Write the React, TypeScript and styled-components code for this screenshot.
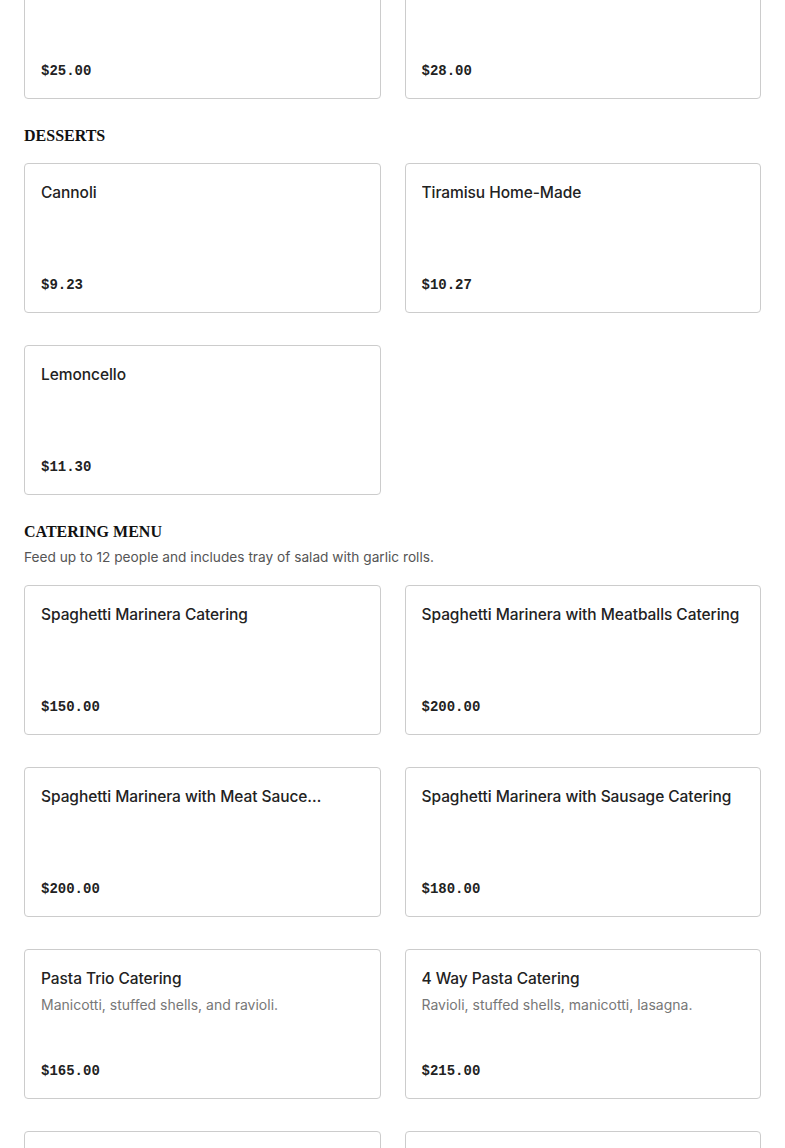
import React from "react";
import styled, { createGlobalStyle } from "styled-components";

const GlobalStyle = createGlobalStyle`
  html, body { margin: 0; padding: 0; background: #ffffff; }
  body { font-family: "Inter", "Liberation Sans", sans-serif; color: #222222; }
  * { box-sizing: border-box; }
`;

const Page = styled.div`
  padding: 0 24px 40px 24px;
  margin-top: -51px;
  display: flex;
  flex-direction: column;
  gap: 24px;
`;

const Section = styled.section`
  display: flex;
  flex-direction: column;
`;

const Heading = styled.h2`
  margin: 0;
  padding-top: 1px;
  font-family: "Liberation Serif", "Times New Roman", serif;
  font-weight: 700;
  font-size: 16px;
  line-height: 23px;
  color: #111111;
  text-transform: uppercase;
`;

const SectionDesc = styled.p`
  margin: 2px 0 0 0;
  padding-top: 1px;
  font-family: "Inter", "Liberation Sans", sans-serif;
  font-size: 13.7px;
  line-height: 23px;
  color: #555555;
`;

const Grid = styled.div<{ $offset: boolean }>`
  display: grid;
  grid-template-columns: 1fr 1fr;
  column-gap: 24px;
  row-gap: 32px;
  margin-top: ${(p) => (p.$offset ? "16px" : "0")};
`;

const Card = styled.div`
  height: 150px;
  border: 1px solid #cccccc;
  border-radius: 4px;
  padding: 17px 16px 15px 16px;
  display: flex;
  flex-direction: column;
  min-width: 0;
  background: #ffffff;
`;

const Title = styled.div`
  font-family: "Inter", "Liberation Sans", sans-serif;
  font-weight: 500;
  font-size: 15.5px;
  letter-spacing: -0.06px;
  line-height: 24px;
  color: #222222;
  display: -webkit-box;
  -webkit-line-clamp: 1;
  -webkit-box-orient: vertical;
  overflow: hidden;
`;

const Desc = styled.div`
  margin-top: 4px;
  font-family: "Inter", "Liberation Sans", sans-serif;
  font-size: 14px;
  line-height: 20px;
  color: #777777;
`;

const Price = styled.div`
  margin-top: auto;
  font-family: "Liberation Mono", "Courier New", monospace;
  font-weight: 700;
  font-size: 14px;
  line-height: 24px;
  color: #222222;
`;

type Item = { name: string; desc?: string; price: string };
type Sec = { title?: string; desc?: string; items: Item[] };

const sections: Sec[] = [
  {
    items: [
      { name: "Family Tray Salad", price: "$25.00" },
      { name: "Family Tray Wings", price: "$28.00" },
    ],
  },
  {
    title: "Desserts",
    items: [
      { name: "Cannoli", price: "$9.23" },
      { name: "Tiramisu Home-Made", price: "$10.27" },
      { name: "Lemoncello", price: "$11.30" },
    ],
  },
  {
    title: "Catering Menu",
    desc: "Feed up to 12 people and includes tray of salad with garlic rolls.",
    items: [
      { name: "Spaghetti Marinera Catering", price: "$150.00" },
      { name: "Spaghetti Marinera with Meatballs Catering", price: "$200.00" },
      { name: "Spaghetti Marinera with Meat Sauce Catering", price: "$200.00" },
      { name: "Spaghetti Marinera with Sausage Catering", price: "$180.00" },
      { name: "Pasta Trio Catering", desc: "Manicotti, stuffed shells, and ravioli.", price: "$165.00" },
      { name: "4 Way Pasta Catering", desc: "Ravioli, stuffed shells, manicotti, lasagna.", price: "$215.00" },
      { name: "Baked Ziti Catering", price: "$150.00" },
      { name: "Lasagna Catering", price: "$180.00" },
    ],
  },
];

export default function App() {
  return (
    <>
      <GlobalStyle />
      <Page>
        {sections.map((s, i) => (
          <Section key={i}>
            {s.title && <Heading>{s.title}</Heading>}
            {s.desc && <SectionDesc>{s.desc}</SectionDesc>}
            <Grid $offset={!!s.title}>
              {s.items.map((it) => (
                <Card key={it.name}>
                  <Title>{it.name}</Title>
                  {it.desc && <Desc>{it.desc}</Desc>}
                  <Price>{it.price}</Price>
                </Card>
              ))}
            </Grid>
          </Section>
        ))}
      </Page>
    </>
  );
}
